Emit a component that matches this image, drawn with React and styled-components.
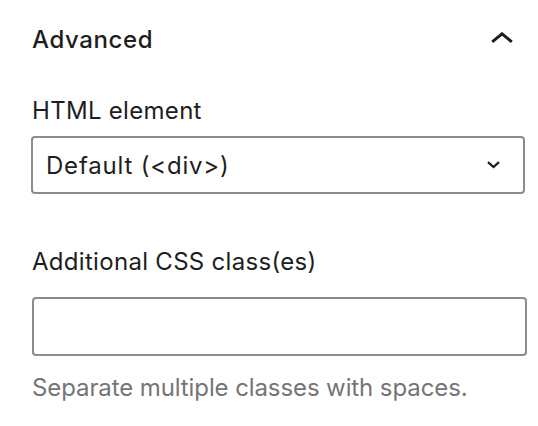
import React from "react";
import styled, { createGlobalStyle } from "styled-components";

const Global = createGlobalStyle`
  html, body {
    margin: 0;
    padding: 0;
    background: #fff;
  }
  body {
    font-family: "Inter", "Roboto", sans-serif;
    color: #1e1e1e;
  }
`;

const Panel = styled.div`
  width: 538px;
  height: 426px;
  box-sizing: border-box;
  padding: 28px 25px 0 32px;
  display: flex;
  flex-direction: column;
`;

const Header = styled.div`
  display: flex;
  align-items: flex-start;
  justify-content: space-between;
`;

const Title = styled.h2`
  margin: 0;
  font-size: 24px;
  line-height: 24px;
  font-weight: 500;
  letter-spacing: 0.6px;
`;

const Toggle = styled.span`
  display: flex;
  margin-top: 4px;
`;

const Field = styled.div`
  display: flex;
  flex-direction: column;
  margin-top: ${(p) => p.$top}px;
`;

const Label = styled.label`
  font-size: 24px;
  line-height: 24px;
  font-weight: 400;
  letter-spacing: 0.3px;
  margin-bottom: ${(p) => p.$gap}px;
`;

const SelectBox = styled.div`
  width: 494px;
  height: 58px;
  margin-left: -1px;
  box-sizing: border-box;
  border: 2px solid #8c8c8c;
  border-radius: 4px;
  display: flex;
  align-items: center;
  justify-content: space-between;
  padding: 0 23px 0 13px;
  font-size: 24px;
  letter-spacing: 0.8px;
`;

const Input = styled.input`
  width: 495px;
  height: 59px;
  box-sizing: border-box;
  border: 2px solid #8c8c8c;
  border-radius: 4px;
  margin: 0;
  outline: none;
  font-size: 24px;
`;

const Help = styled.p`
  margin: 20px 0 0;
  font-size: 24px;
  line-height: 24px;
  letter-spacing: -0.1px;
  color: #757575;
`;

const ChevronUp = () => (
  <svg width="22" height="11" viewBox="0 0 22 11" fill="none">
    <path d="M1.2 9.8 L11 1.8 L20.8 9.8" stroke="#1e1e1e" strokeWidth="3" />
  </svg>
);

const ChevronDown = () => (
  <svg width="13" height="8" viewBox="0 0 13 8" fill="none">
    <path d="M1 1.2 L6.5 6 L12 1.2" stroke="#1e1e1e" strokeWidth="2.3" />
  </svg>
);

export default function App() {
  return (
    <>
      <Global />
      <Panel>
        <Header>
          <Title>Advanced</Title>
          <Toggle>
            <ChevronUp />
          </Toggle>
        </Header>
        <Field $top={47}>
          <Label $gap={13}>HTML element</Label>
          <SelectBox>
            <span>Default (&lt;div&gt;)</span>
            <ChevronDown />
          </SelectBox>
        </Field>
        <Field $top={56}>
          <Label $gap={23}>Additional CSS class(es)</Label>
          <Input type="text" />
          <Help>Separate multiple classes with spaces.</Help>
        </Field>
      </Panel>
    </>
  );
}
